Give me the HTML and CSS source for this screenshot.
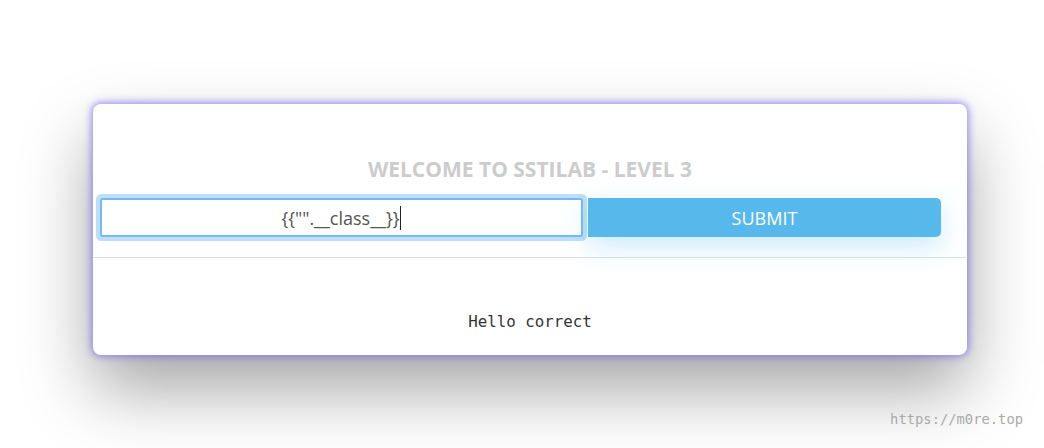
FILE: index.html
```html
<!DOCTYPE html>
<html>
<head>
<meta charset="utf-8">
<link rel="stylesheet" href="styles.css">
</head>
<body>
<div class="page">
  <div class="card">
    <h1 class="title">WELCOME TO SSTILAB - LEVEL 3</h1>
    <form class="form">
      <div class="field"><span class="value">{{"".__class__}}</span><span class="caret"></span></div>
      <button type="button" class="submit">SUBMIT</button>
    </form>
    <hr class="divider">
    <pre class="result">Hello correct</pre>
  </div>
  <div class="footer">https://m0re.top</div>
</div>
</body>
</html>
```
FILE: styles.css
```css
html, body {
  margin: 0;
  padding: 0;
  background: #fff;
  height: 100%;
  overflow: hidden;
}
.page {
  padding: 104px 0 0 93px;
  width: 874px;
}
.card {
  width: 874px;
  height: 251px;
  box-sizing: border-box;
  background: #fff;
  border-radius: 8px;
  box-shadow: 0 0 7px 2px rgba(120, 110, 235, 0.7), 0 34px 70px rgba(0, 0, 0, 0.36);
  padding-top: 50px;
  display: flex;
  flex-direction: column;
}
.title {
  margin: 0;
  height: 30px;
  line-height: 30px;
  text-align: center;
  font-family: "Open Sans", sans-serif;
  font-weight: 700;
  font-size: 21px;
  color: #cccccc;
}
.form {
  margin: 14px 26px 0 7px;
  display: flex;
  gap: 5px;
  height: 39px;
}
.field {
  width: 483px;
  box-sizing: border-box;
  border: 2px solid #74bbf4;
  box-shadow: 0 0 0 4px #bfdefb;
  border-radius: 2px;
  display: flex;
  align-items: center;
  justify-content: center;
  font-family: "Open Sans", sans-serif;
  font-size: 18px;
  color: #555;
}
.caret {
  display: inline-block;
  width: 1px;
  height: 24px;
  background: #222;
  margin-left: 1px;
}
.submit {
  flex: 1;
  border: none;
  border-radius: 0 5px 5px 0;
  background: #57b9eb;
  color: #fff;
  font-family: "Open Sans", sans-serif;
  font-size: 18px;
  padding: 0;
  box-shadow: 0 10px 28px rgba(87, 185, 235, 0.3);
}
.divider {
  margin: 20px 1px 0 0;
  border: none;
  border-top: 1px solid #dddddd;
  height: 0;
}
.result {
  margin: 54px 0 0 0;
  text-align: center;
  font-family: "DejaVu Sans Mono", monospace;
  font-size: 15.8px;
  line-height: 20px;
  color: #333;
}
.footer {
  margin-top: 56px;
  text-align: right;
  font-family: "DejaVu Sans Mono", monospace;
  font-size: 13.8px;
  line-height: 16px;
  color: #aaaaaa;
  margin-right: -56px;
}
```
